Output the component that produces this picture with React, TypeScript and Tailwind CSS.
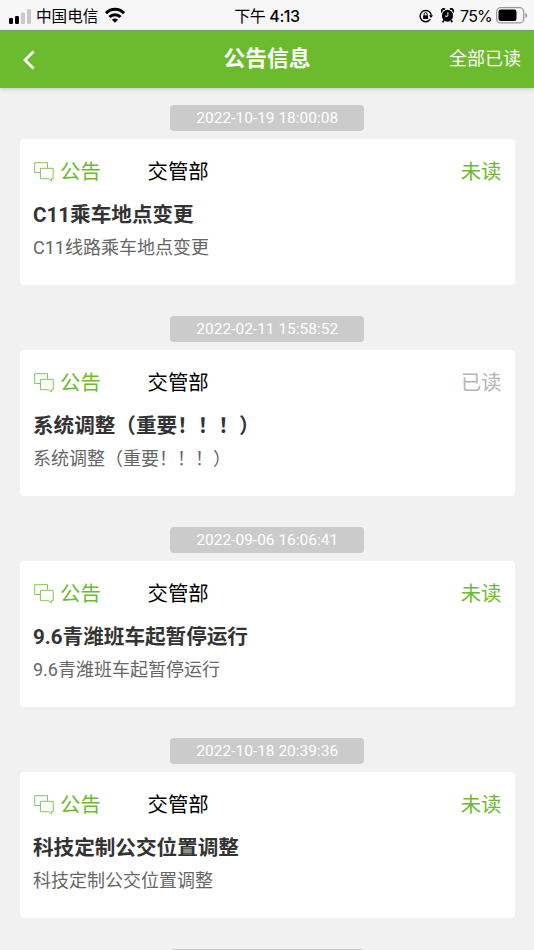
const notices = [
  { time: '2022-10-19 18:00:08', title: 'C11乘车地点变更', text: 'C11线路乘车地点变更', read: false },
  { time: '2022-02-11 15:58:52', title: '系统调整（重要！！！）', text: '系统调整（重要！！！）', read: true },
  { time: '2022-09-06 16:06:41', title: '9.6青潍班车起暂停运行', text: '9.6青潍班车起暂停运行', read: false },
  { time: '2022-10-18 20:39:36', title: '科技定制公交位置调整', text: '科技定制公交位置调整', read: false },
];

function StatusBar() {
  return (
    <div className="grid h-[31px] shrink-0 grid-cols-3 items-center border-b border-[#76a874] bg-[#f7f7f7] pt-px font-['Inter','Noto_Sans_CJK_SC',sans-serif] text-black">
      <div className="flex items-center pl-[9px]">
        <svg width="22" height="16" viewBox="0 0 22 16">
          <rect x="0" y="10" width="4" height="6" rx="1.2" />
          <rect x="6" y="8" width="4" height="8" rx="1.2" />
          <rect x="12" y="4.5" width="4" height="11.5" rx="1.2" fill="#c8c8c8" />
          <rect x="18" y="1" width="4" height="15" rx="1.2" fill="#c8c8c8" />
        </svg>
        <span className="ml-[5px] pt-[3px] text-[15.6px] leading-5 whitespace-nowrap">中国电信</span>
        <svg className="-mt-[2px] ml-[7px]" width="20" height="16" viewBox="0 0 20 16" fill="none" stroke="#000" strokeWidth="3.1">
          <path d="M1 6.2C6 .9 14 .9 19 6.2" />
          <path d="M4.5 10C7.5 6.9 12.5 6.9 15.5 10" />
          <path d="M10 15.8 6.9 12.7C8.6 11 11.4 11 13.1 12.7Z" fill="#000" stroke="none" />
        </svg>
      </div>
      <div className="pt-px text-center text-[16px] leading-5 font-medium tracking-[-0.4px] whitespace-nowrap"><span className="font-normal">下午</span> 4:13</div>
      <div className="flex items-center justify-end pr-[6px]">
        <svg width="14" height="14" viewBox="0 0 14 14" fill="none" stroke="#000" strokeWidth="1.4">
          <path d="M11.4 10.2A5.6 5.6 0 1 1 12.3 6.4" />
          <path d="M10 6.3h4l-2 2.8z" fill="#000" stroke="none" />
          <rect x="4.1" y="6.2" width="5" height="3.8" rx=".5" fill="#000" stroke="none" />
          <path d="M5.1 6.4V5.2a1.5 1.5 0 0 1 3 0v1.2" strokeWidth="1" />
        </svg>
        <svg className="ml-[8px]" width="13" height="15" viewBox="0 0 14 15" preserveAspectRatio="none">
          <circle cx="7" cy="7.8" r="6" />
          <path d="M.9 4.3A2.4 2.4 0 0 1 4.3 1.2M13.1 4.3A2.4 2.4 0 0 0 9.7 1.2M3.2 12.3l-1.4 1.9m9-1.9 1.4 1.9" stroke="#000" strokeWidth="1.8" fill="none" />
          <path d="M7.4 4.3v3.9H4.3" stroke="#f7f7f7" fill="none" />
        </svg>
        <span className="ml-[6px] pt-px text-[16px] leading-5 tracking-[-0.8px]">75%</span>
        <svg className="ml-[4px]" width="32" height="17" viewBox="0 0 32 17">
          <rect x=".7" y=".7" width="27" height="15.2" rx="4" fill="none" stroke="#999" strokeWidth="1.3" />
          <rect x="2.5" y="2.5" width="18" height="11.6" rx="2.3" />
          <path d="M29.3 5.7c2.4.8 2.4 4.5 0 5.3z" fill="#999" />
        </svg>
      </div>
    </div>
  );
}

function Header() {
  return (
    <header className="grid h-[57px] shrink-0 grid-cols-3 items-center bg-[#6cbb2e] pb-px text-white shadow-[0_1px_5px_rgba(0,0,0,0.18)]">
      <svg className="mt-[2px] ml-[22px]" width="14" height="20" viewBox="0 0 14 20" fill="none" stroke="currentColor" strokeWidth="2.8">
        <path d="M11.5 1.5 3 10l8.5 8.5" />
      </svg>
      <h1 className="text-center text-[21.8px] leading-8 font-bold whitespace-nowrap">公告信息</h1>
      <button className="pr-[13px] text-right text-[18px] leading-6 whitespace-nowrap">全部已读</button>
    </header>
  );
}

function ChatIcon() {
  return (
    <svg width="20" height="20" viewBox="0 0 20 20" fill="none" stroke="#80c653" strokeWidth="1">
      <path d="M6 10.5H.7V.7h12.8v5.1" />
      <path d="M6.4 6.3h12.8v10.4h-1.9v2.4l-2.5-2.4H6.4z" />
    </svg>
  );
}

function Notice({ item }: { item: (typeof notices)[number] }) {
  return (
    <article className="flex h-[211px] shrink-0 flex-col items-center">
      <time className="h-[26px] w-[194px] rounded-[4px] bg-[#cbcbcb] text-center text-[15.5px] leading-[26px] text-white">{item.time}</time>
      <div className="mt-2 h-[146px] w-full rounded-[4px] bg-white pr-[13px] pl-[13px]">
        <div className="flex h-[66px] items-center text-[20.4px] leading-[30px]">
          <div className="flex w-[114.5px] items-center gap-[6px] pl-px text-[#6cbb2e]">
            <ChatIcon />
            <span>公告</span>
          </div>
          <span className="text-black">交管部</span>
          <span className={item.read ? 'ml-auto text-[#b5b5b5]' : 'ml-auto text-[#6cbb2e]'}>{item.read ? '已读' : '未读'}</span>
        </div>
        <h2 className="-mt-[5px] text-[20.6px] leading-[30px] font-bold text-[#333]">{item.title}</h2>
        <p className="mt-1 text-[18px] leading-[28px] text-[#666]">{item.text}</p>
      </div>
    </article>
  );
}

export default function App() {
  return (
    <div lang="zh-CN" className="flex h-[950px] w-[534px] flex-col overflow-hidden bg-[#f1f1f1] font-['Roboto','Noto_Sans_CJK_SC',sans-serif]">
      <StatusBar />
      <Header />
      <main className="flex min-h-0 flex-1 flex-col overflow-hidden pt-[17px] pr-[19.5px] pl-5">
        {notices.map((item) => (
          <Notice key={item.time} item={item} />
        ))}
        <div className="h-[26px] w-[194px] shrink-0 self-center rounded-[4px] bg-[#cbcbcb]" />
      </main>
    </div>
  );
}
